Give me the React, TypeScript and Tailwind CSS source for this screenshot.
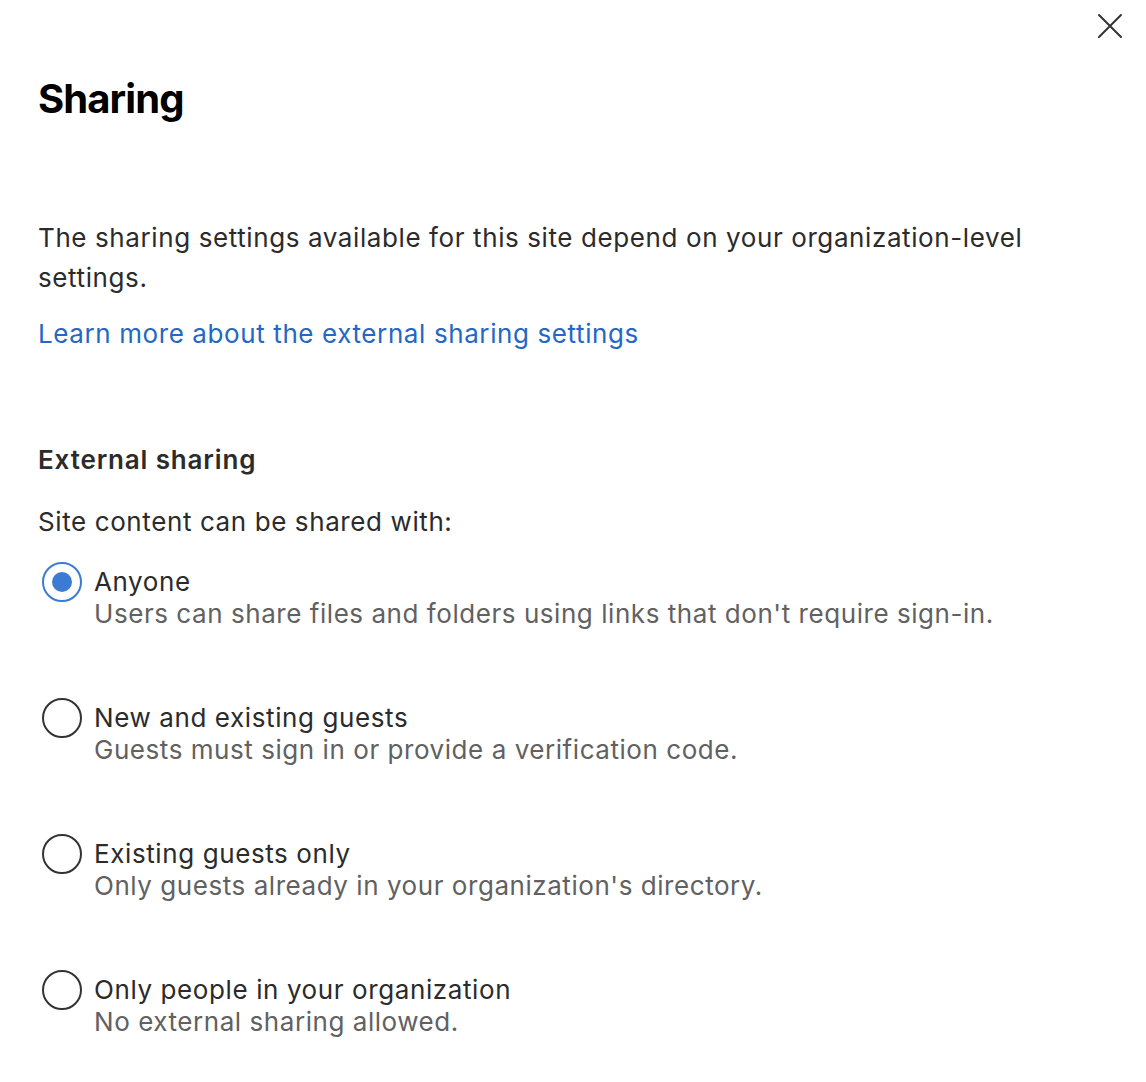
import { useState } from "react";

const options = [
  { id: "anyone", label: "Anyone", desc: "Users can share files and folders using links that don't require sign-in." },
  { id: "guests", label: "New and existing guests", desc: "Guests must sign in or provide a verification code." },
  { id: "existing", label: "Existing guests only", desc: "Only guests already in your organization's directory." },
  { id: "org", label: "Only people in your organization", desc: "No external sharing allowed." },
];

const App = () => {
  const [selected, setSelected] = useState("anyone");

  return (
    <div
      className="relative min-h-screen bg-white px-[38px] pb-10 text-[#2b2b2b]"
      style={{ fontFamily: "Inter, 'Noto Sans', sans-serif" }}
    >
      {/* Close button */}
      <button className="absolute right-[22px] top-[12px] flex h-[28px] w-[28px] items-center justify-center text-[#333]">
        <svg width="26" height="26" viewBox="0 0 26 26" fill="none">
          <path d="M2 2L24 24M24 2L2 24" stroke="currentColor" strokeWidth="2" strokeLinecap="round" />
        </svg>
      </button>

      <h1 className="pt-[75px] text-[40px] font-bold leading-[48px] tracking-[-0.9px] text-black">Sharing</h1>

      <p className="mt-[95px] max-w-[1040px] text-[26px] leading-[40px] tracking-[0.6px]">
        The sharing settings available for this site depend on your organization-level settings.
      </p>

      <a href="#" className="mt-[16px] block text-[26px] leading-[40px] tracking-[0.6px] text-[#2467c4]">
        Learn more about the external sharing settings
      </a>

      <h2 className="mt-[86px] text-[26px] font-semibold leading-[40px] tracking-[0.85px]">External sharing</h2>

      <p className="mt-[22px] text-[26px] leading-[40px] tracking-[0.6px]">Site content can be shared with:</p>

      <div className="mt-[24px] flex flex-col gap-[72px]">
        {options.map((o) => {
          const on = selected === o.id;
          return (
            <label key={o.id} className="flex cursor-pointer items-start gap-[12px]" onClick={() => setSelected(o.id)}>
              <span
                className={`ml-[4px] mt-[-4px] flex h-[40px] w-[40px] shrink-0 items-center justify-center rounded-full border-2 ${
                  on ? "border-[#3b7bd4]" : "border-[#333333]"
                }`}
              >
                {on && <span className="h-[20px] w-[20px] rounded-full bg-[#3b7bd4]" />}
              </span>
              <span className="flex flex-col">
                <span className="text-[26px] leading-[32px] tracking-[0.6px]">{o.label}</span>
                <span className="text-[26px] leading-[32px] tracking-[0.55px] text-[#616161]">{o.desc}</span>
              </span>
            </label>
          );
        })}
      </div>
    </div>
  );
};

export default App;
